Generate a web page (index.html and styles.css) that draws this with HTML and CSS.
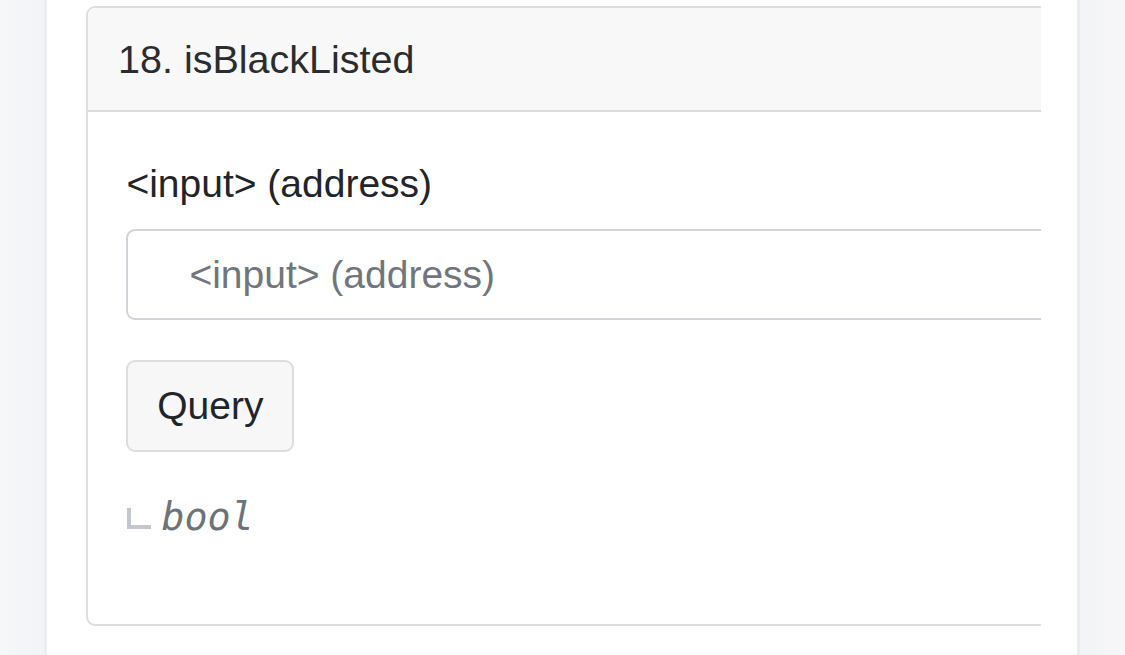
FILE: index.html
```html
<!DOCTYPE html>
<html lang="en">
<head>
<meta charset="utf-8">
<title>isBlackListed</title>
<link rel="stylesheet" href="styles.css">
</head>
<body>
<div class="page">
  <div class="side side-left"></div>
  <main class="panel">
    <div class="clip">
      <section class="card">
        <div class="card-header">18. isBlackListed</div>
        <div class="card-body">
          <form class="query-form">
            <div class="form-group">
              <label class="label" for="addr">&lt;input&gt; (address)</label>
              <input class="form-control" id="addr" type="text" placeholder="&lt;input&gt; (address)">
            </div>
            <button class="btn" type="button">Query</button>
            <div class="result"><span class="corner"></span><i class="type">bool</i></div>
          </form>
        </div>
      </section>
    </div>
  </main>
  <div class="side side-right"></div>
</div>
</body>
</html>
```

FILE: styles.css
```css
html, body {
  margin: 0;
  padding: 0;
  height: 100%;
  overflow: hidden;
  background: #f5f6f8;
  font-family: "Liberation Sans", Arial, sans-serif;
  color: #212529;
}

.page {
  display: flex;
  height: 655px;
  width: 1125px;
}

.side {
  height: 100%;
}

.side-left {
  width: 44px;
  background: linear-gradient(to right, #f6f7f9, #f3f4f7);
  border-right: 3px solid #ececf3;
}

.side-right {
  flex: 1;
  background: linear-gradient(to right, #f3f4f7, #f7f7f9);
  border-left: 3px solid #ebebf2;
}

.panel {
  width: 1030px;
  background: #ffffff;
  padding: 6px 36px 0 39px;
  box-sizing: border-box;
}

.clip {
  overflow: hidden;
  width: 955px;
}

.card {
  width: 1200px;
  border: 2.4px solid #dedede;
  border-radius: 9px;
  background: #fff;
  box-sizing: border-box;
}

.card-header {
  background: #f8f8f8;
  border-bottom: 2.4px solid #dcdcdc;
  border-radius: 7px 7px 0 0;
  padding: 28.8px 30px 28.8px 30px;
  font-size: 39.5px;
  line-height: 44px;
  color: #2a2c30;
}

.card-body {
  padding: 43px 38.4px 38px 38.4px;
}

.form-group {
  display: flex;
  flex-direction: column;
  margin-bottom: 40px;
}

.label {
  font-size: 39px;
  line-height: 57.6px;
  margin-bottom: 17px;
  color: #212529;
}

.form-control {
  height: 91px;
  box-sizing: border-box;
  border: 2.4px solid #d0d3d7;
  border-radius: 9px;
  padding: 0 28px 0 61px;
  font-family: "Liberation Sans", Arial, sans-serif;
  font-size: 39px;
  color: #495057;
  background: #fff;
  outline: none;
}

.form-control::placeholder {
  color: #70767d;
  opacity: 1;
}

.btn {
  display: block;
  box-sizing: border-box;
  height: 92px;
  padding: 0 28.8px;
  font-family: "Liberation Sans", Arial, sans-serif;
  font-size: 39px;
  color: #212529;
  background: #f7f7f8;
  border: 2.4px solid #dcdde0;
  border-radius: 9px;
}

.result {
  display: flex;
  align-items: baseline;
  margin-top: 36px;
  margin-bottom: 40px;
  font-family: "DejaVu Sans Mono", "Liberation Mono", monospace;
  font-size: 38.4px;
  line-height: 57.6px;
}

.corner {
  display: inline-block;
  width: 20px;
  height: 17px;
  border-left: 4px solid #c3c6cc;
  border-bottom: 4px solid #c3c6cc;
  margin-left: 1px;
  margin-right: 10px;
  align-self: center;
  position: relative;
  top: 2px;
}

.type {
  font-style: oblique;
  color: #6c737a;
  letter-spacing: 0;
}
```
